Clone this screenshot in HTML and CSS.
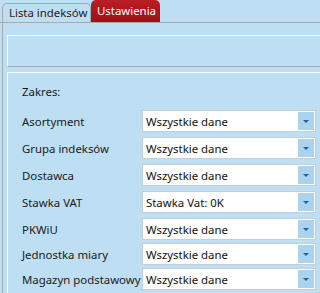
FILE: index.html
```html
<!DOCTYPE html>
<html lang="pl">
<head>
  <meta charset="UTF-8">
  <title>Ustawienia</title>
  <link rel="stylesheet" href="styles.css">
</head>
<body>
  <div class="tabs">
    <div class="tab">Lista indeksów</div>
    <div class="tab active">Ustawienia</div>
  </div>

  <div class="panel">
    <div class="group top-group"></div>

    <div class="group range">
      <div class="range-title">Zakres:</div>

      <div class="row">
        <label>Asortyment</label>
        <div class="combo"><span>Wszystkie dane</span><i class="drop"></i></div>
      </div>
      <div class="row">
        <label>Grupa indeksów</label>
        <div class="combo"><span>Wszystkie dane</span><i class="drop"></i></div>
      </div>
      <div class="row">
        <label>Dostawca</label>
        <div class="combo"><span>Wszystkie dane</span><i class="drop"></i></div>
      </div>
      <div class="row">
        <label>Stawka VAT</label>
        <div class="combo"><span>Stawka Vat: 0K</span><i class="drop"></i></div>
      </div>
      <div class="row tight">
        <label>PKWiU</label>
        <div class="combo"><span>Wszystkie dane</span><i class="drop"></i></div>
      </div>
      <div class="row tight">
        <label>Jednostka miary</label>
        <div class="combo"><span>Wszystkie dane</span><i class="drop"></i></div>
      </div>
      <div class="row tight">
        <label>Magazyn podstawowy</label>
        <div class="combo"><span>Wszystkie dane</span><i class="drop"></i></div>
      </div>
    </div>
  </div>
</body>
</html>
```

FILE: styles.css
```css
body {
  margin: 0;
  height: 293px;
  overflow: hidden;
  background: #bedef4;
  font-family: 'Noto Sans', sans-serif;
  font-size: 11.4px;
  color: #1a1a1a;
}

.tabs {
  display: flex;
  align-items: flex-end;
  height: 22px;
  padding-left: 2px;
  border-bottom: 1px solid #a9a9a9;
}

.tab {
  width: 89px;
  height: 19px;
  line-height: 18px;
  padding-left: 6px;
  box-sizing: border-box;
  border: 1px solid #a9a9a9;
  border-bottom: none;
  border-radius: 5px 5px 0 0;
  color: #222;
}

.tab.active {
  width: 69px;
  height: 22px;
  line-height: 21px;
  padding-left: 6px;
  border: none;
  background: linear-gradient(#b81e26, #a10f15);
  color: #fff;
}

.panel {
  margin-left: 2px;
  border-left: 1px solid #a9a9a9;
  padding: 12px 0 0 4px;
  height: 258px;
  overflow: hidden;
}

.group {
  border-top: 1px solid #fff;
  border-left: 1px solid #fff;
}

.top-group {
  height: 30px;
  border-bottom: 1px solid #a9a9a9;
  margin-bottom: 5px;
}

.range {
  padding: 10px 0 0 14px;
  height: 240px;
}

.range-title {
  height: 17px;
  line-height: 17px;
  margin-bottom: 10px;
}

.row {
  display: flex;
  align-items: center;
  margin-bottom: 5px;
}

.row.tight {
  margin-bottom: 3px;
}

.row label {
  width: 120px;
  white-space: nowrap;
}

.combo {
  display: flex;
  align-items: center;
  width: 174px;
  height: 22px;
  box-sizing: border-box;
  border: 1px solid #c5ced6;
  background: #fff;
  padding: 1px;
}

.combo span {
  flex: 1;
  padding-left: 2px;
  color: #111;
}

.drop {
  width: 16px;
  height: 18px;
  background: #a9d3ee;
  position: relative;
}

.drop::after {
  content: "";
  position: absolute;
  left: 5px;
  top: 8px;
  border-left: 3px solid transparent;
  border-right: 3px solid transparent;
  border-top: 3px solid #23629c;
}
```
